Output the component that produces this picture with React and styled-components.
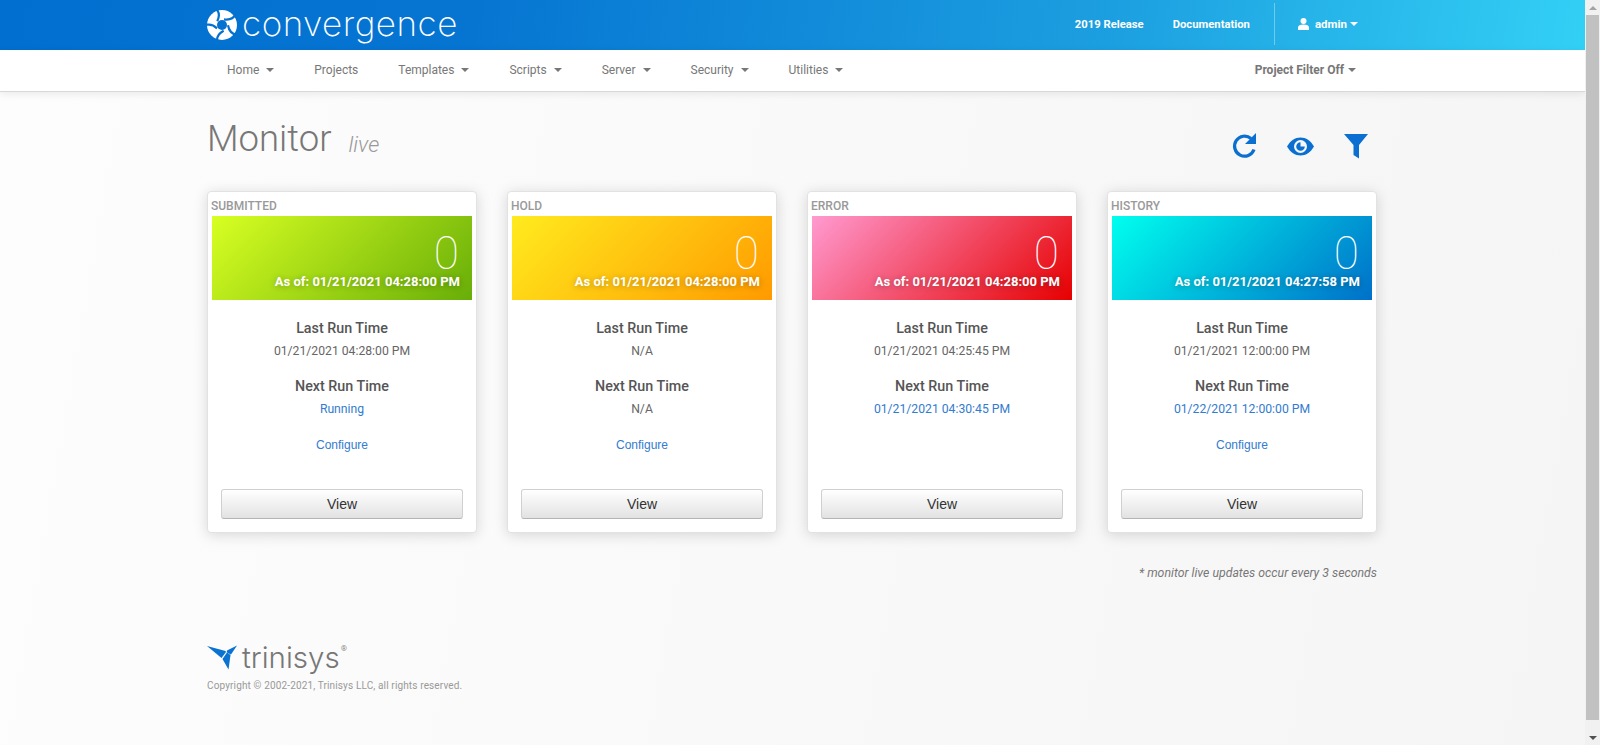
import React from "react";
import styled, { createGlobalStyle } from "styled-components";

const Global = createGlobalStyle`
    html, body {
        margin: 0;
        height: 100%;
        overflow: hidden;
    }
    body {
        font-family: "Roboto", sans-serif;
    }
    #root {
        height: 100%;
    }
`;

const Shell = styled.div`
    display: flex;
    height: 745px;
    width: 1600px;
`;

const Page = styled.div`
    flex: 1;
    min-width: 0;
    display: flex;
    flex-direction: column;
    background: linear-gradient(100deg, #fdfdfd 0%, #f5f5f5 100%);
`;

const Scrollbar = styled.div`
    width: 15px;
    flex: none;
    display: flex;
    flex-direction: column;
    background: #f1f1f1;
`;

const ScrollButton = styled.div`
    height: 15px;
    display: flex;
    align-items: center;
    justify-content: center;

    &::after {
        content: "";
        border-left: 4px solid transparent;
        border-right: 4px solid transparent;
        border-${(p) => (p.$up ? "bottom" : "top")}: 4px solid ${(p) => (p.$up ? "#a3a3a3" : "#505050")};
    }
`;

const ScrollThumb = styled.div`
    height: 705px;
    margin: 0 1px;
    background: #c1c1c1;
`;

const ScrollRest = styled.div`
    flex: 1;
`;

const Container = styled.div`
    width: 1170px;
    margin-left: 207px;
`;

const Header = styled.header`
    height: 50px;
    flex: none;
    background: linear-gradient(100deg, #006fcf 0%, #0675d2 30%, #1c9fe0 70%, #33d0f5 100%);
`;

const HeaderRow = styled(Container)`
    height: 100%;
    display: flex;
    align-items: center;
`;

const Brand = styled.div`
    display: flex;
    align-items: center;
    gap: 5px;
`;

const BrandName = styled.span`
    font-family: "Inter", sans-serif;
    font-weight: 200;
    font-size: 35px;
    line-height: 46px;
    padding-bottom: 4px;
    color: #fff;
    letter-spacing: 0.5px;
`;

const HeaderLinks = styled.nav`
    margin-left: auto;
    display: flex;
    align-items: center;
    height: 100%;
    padding-bottom: 2px;
    box-sizing: border-box;
`;

const HeaderLink = styled.a`
    font-size: 11.25px;
    font-weight: 700;
    color: #fff;
    margin-right: 24px;

    & + & {
        margin-left: 5px;
    }
`;

const UserMenu = styled.div`
    height: 42px;
    border-left: 1px solid rgba(255, 255, 255, 0.35);
    margin-right: 19px;
    padding-left: 23px;
    display: flex;
    align-items: center;
    gap: 6px;
    font-size: 11.5px;
    font-weight: 700;
    color: #fff;
`;

const Caret = styled.span`
    display: inline-block;
    border-left: 4px solid transparent;
    border-right: 4px solid transparent;
    border-top: 4px solid currentColor;
    margin-left: ${(p) => p.$gap ?? 7}px;
`;

const NavBar = styled.div`
    height: 41px;
    flex: none;
    background: #fff;
    border-bottom: 1px solid #d8d8d8;
    box-shadow: 0 2px 8px rgba(0, 0, 0, 0.08);
`;

const NavRow = styled(Container)`
    height: 100%;
    display: flex;
    align-items: center;
    padding-bottom: 2px;
    box-sizing: border-box;
`;

const NavItem = styled.a`
    font-size: 12px;
    color: #777;
    padding: 0 20px;
    display: flex;
    align-items: center;
`;

const FilterItem = styled.a`
    margin-left: auto;
    margin-right: 21px;
    font-size: 12px;
    font-weight: 700;
    color: #777;
    display: flex;
    align-items: center;
`;

const Content = styled(Container)`
    flex: 1;
    display: flex;
    flex-direction: column;
`;

const TitleRow = styled.div`
    display: flex;
    align-items: center;
    height: 100px;
    margin-bottom: -1px;
`;

const Title = styled.h1`
    margin: 0;
    font-size: 36.5px;
    font-weight: 300;
    color: #777;
    line-height: 92px;
`;

const TitleNote = styled.small`
    font-size: 22px;
    font-style: italic;
    font-weight: 300;
    color: #999;
    margin-left: 17px;
    vertical-align: -1px;
`;

const Tools = styled.div`
    margin: 8px 9px 0 auto;
    display: flex;
    align-items: center;
    gap: 30px;
`;

const Cards = styled.div`
    display: grid;
    grid-template-columns: repeat(4, 270px);
    gap: 30px;
`;

const Card = styled.section`
    height: 342px;
    box-sizing: border-box;
    display: flex;
    flex-direction: column;
    background: #fff;
    border: 1px solid #e2e2e2;
    border-radius: 4px;
    padding: 0 4px;
    box-shadow: 0 2px 14px rgba(0, 0, 0, 0.15);
    text-align: center;
`;

const CardLabel = styled.div`
    font-size: 12px;
    font-weight: 500;
    color: #999;
    text-align: left;
    height: 24px;
    line-height: 28px;
    margin-left: -1px;
`;

const Banner = styled.div`
    height: 84px;
    padding-right: 12px;
    display: flex;
    flex-direction: column;
    align-items: flex-end;
    color: #fff;
    background: linear-gradient(135deg, ${(p) => p.$from}, ${(p) => p.$to});
`;

const Count = styled.div`
    font-size: 46px;
    font-weight: 100;
    line-height: 42px;
    margin-top: 16px;
    padding-right: 1px;
`;

const AsOf = styled.div`
    font-size: 13px;
    font-weight: 700;
    line-height: 16px;
    text-shadow: 0 1px 6px rgba(0, 0, 0, 0.3);
`;

const InfoHeading = styled.div`
    font-size: 14.3px;
    font-weight: 500;
    color: #555;
    line-height: 20px;
    margin-top: ${(p) => (p.$first ? 18 : 16)}px;
`;

const InfoValue = styled.div`
    font-size: 12.2px;
    color: ${(p) => (p.$link ? "#337ccf" : "#666")};
    line-height: 18px;
    min-height: 18px;
    margin-top: 4px;
`;

const ConfigureLink = styled.a`
    font-family: "Liberation Sans", sans-serif;
    font-size: 12px;
    color: #337ccf;
    line-height: 18px;
    margin-top: 18px;
`;

const ViewButton = styled.button`
    margin: auto 9px 13px;
    height: 30px;
    flex: none;
    font-family: "Liberation Sans", sans-serif;
    font-size: 14px;
    color: #333;
    background: linear-gradient(#fff, #e2e2e2);
    border: 1px solid #d0d0d0;
    border-bottom-color: #b4b4b4;
    border-radius: 3px;
`;

const LiveNote = styled.p`
    margin: 31px 0 0;
    text-align: right;
    font-size: 12.3px;
    font-style: italic;
    color: #777;
    line-height: 18px;
`;

const Footer = styled.footer`
    margin-top: 60px;
`;

const TrinisysBrand = styled.div`
    display: flex;
    align-items: center;
    gap: 5px;
    height: 30px;
`;

const TrinisysName = styled.span`
    font-family: "Inter", sans-serif;
    font-size: 29.5px;
    font-weight: 300;
    color: #777;
    line-height: 30px;
`;

const Registered = styled.sup`
    font-size: 8px;
    color: #888;
    align-self: flex-start;
    margin-left: -4px;
    line-height: 14px;
`;

const Copyright = styled.div`
    margin-top: 7px;
    font-size: 10px;
    color: #999;
    line-height: 14px;
    letter-spacing: 0.14px;
`;

const monitors = [
    {
        label: "SUBMITTED",
        from: "#d8ff22",
        to: "#68ae08",
        asOf: "01/21/2021 04:28:00 PM",
        last: "01/21/2021 04:28:00 PM",
        next: "Running",
        nextLink: true,
        configurable: true,
    },
    {
        label: "HOLD",
        from: "#ffeb1e",
        to: "#ff9a00",
        asOf: "01/21/2021 04:28:00 PM",
        last: "N/A",
        next: "N/A",
        configurable: true,
    },
    {
        label: "ERROR",
        from: "#ff9ad0",
        to: "#e60000",
        asOf: "01/21/2021 04:28:00 PM",
        last: "01/21/2021 04:25:45 PM",
        next: "01/21/2021 04:30:45 PM",
        nextLink: true,
    },
    {
        label: "HISTORY",
        from: "#00ffee",
        to: "#0070c9",
        asOf: "01/21/2021 04:27:58 PM",
        last: "01/21/2021 12:00:00 PM",
        next: "01/22/2021 12:00:00 PM",
        nextLink: true,
        configurable: true,
    },
];

const navItems = [
    { name: "Home", menu: true },
    { name: "Projects" },
    { name: "Templates", menu: true },
    { name: "Scripts", menu: true },
    { name: "Server", menu: true },
    { name: "Security", menu: true },
    { name: "Utilities", menu: true },
];

function SwirlLogo() {
    const blades = [20, 92, 164, 236, 308];
    return (
        <svg width="30" height="30" viewBox="0 0 30 30">
            <circle cx="15" cy="15" r="15" fill="#fff" />
            {blades.map((a) => (
                <path
                    key={a}
                    d="M15 9C20 8 24 4.500 24.500 -1"
                    fill="none"
                    stroke="#0470cf"
                    strokeWidth="2.200"
                    transform={`rotate(${a} 15 15)`}
                />
            ))}
            <circle cx="15" cy="15" r="5" fill="#0470cf" />
        </svg>
    );
}

function TrinisysMark() {
    return (
        <svg width="30" height="25" viewBox="0 0 30 25">
            <path d="M0 1L18.500 6L19 7L14.500 13Z" fill="#0a72d0" />
            <path d="M30 0.500L20 5.500L19.800 7.500L24 9.500Z" fill="#0a72d0" />
            <path d="M15.500 14L20 7.500L23.500 10L21.500 24.500Z" fill="#0a72d0" />
        </svg>
    );
}

function RefreshIcon() {
    return (
        <svg width="25" height="26" viewBox="0 0 25 26">
            <path d="M22 16.500A10 10 0 1 1 19 5.500" fill="none" stroke="#0a6fd0" strokeWidth="3.200" />
            <path d="M24 0V11H13Z" fill="#0a6fd0" />
        </svg>
    );
}

function EyeIcon() {
    return (
        <svg width="27" height="19" viewBox="0 0 27 19">
            <path
                fillRule="evenodd"
                d="M0 9.500C3.500 3.500 8 0.500 13.500 0.500S23.500 3.500 27 9.500C23.500 15.500 19 18.500 13.500 18.500S3.500 15.500 0 9.500ZM13.500 3A6.500 6.500 0 1 0 13.500 16A6.500 6.500 0 1 0 13.500 3Z"
                fill="#0a6fd0"
            />
            <path d="M13.500 5.200A4.300 4.300 0 1 0 17.800 9.500H13.500Z" fill="#0a6fd0" />
        </svg>
    );
}

function FilterIcon() {
    return (
        <svg width="24" height="25" viewBox="0 0 24 25">
            <path d="M0 0H24L15 11V24.500L9.500 21V11Z" fill="#0a6fd0" />
        </svg>
    );
}

function UserIcon() {
    return (
        <svg width="11" height="12" viewBox="0 0 11 12">
            <circle cx="5.500" cy="3" r="3" fill="#fff" />
            <path d="M0 12V9.500C0 7.500 2 6.500 5.500 6.500S11 7.500 11 9.500V12Z" fill="#fff" />
        </svg>
    );
}

function MonitorCard({ monitor }) {
    return (
        <Card>
            <CardLabel>{monitor.label}</CardLabel>
            <Banner $from={monitor.from} $to={monitor.to}>
                <Count>0</Count>
                <AsOf>As of: {monitor.asOf}</AsOf>
            </Banner>
            <InfoHeading $first>Last Run Time</InfoHeading>
            <InfoValue>{monitor.last}</InfoValue>
            <InfoHeading>Next Run Time</InfoHeading>
            <InfoValue $link={monitor.nextLink}>{monitor.next}</InfoValue>
            {monitor.configurable && <ConfigureLink>Configure</ConfigureLink>}
            <ViewButton>View</ViewButton>
        </Card>
    );
}

export default function App() {
    return (
        <Shell>
            <Global />
            <Page>
                <Header>
                    <HeaderRow>
                        <Brand>
                            <SwirlLogo />
                            <BrandName>convergence</BrandName>
                        </Brand>
                        <HeaderLinks>
                            <HeaderLink>2019 Release</HeaderLink>
                            <HeaderLink>Documentation</HeaderLink>
                            <UserMenu>
                                <UserIcon />
                                admin
                                <Caret $gap={-3} />
                            </UserMenu>
                        </HeaderLinks>
                    </HeaderRow>
                </Header>
                <NavBar>
                    <NavRow>
                        {navItems.map((item) => (
                            <NavItem key={item.name}>
                                {item.name}
                                {item.menu && <Caret />}
                            </NavItem>
                        ))}
                        <FilterItem>
                            Project Filter Off
                            <Caret $gap={4} />
                        </FilterItem>
                    </NavRow>
                </NavBar>
                <Content>
                    <TitleRow>
                        <Title>
                            Monitor
                            <TitleNote>live</TitleNote>
                        </Title>
                        <Tools>
                            <RefreshIcon />
                            <EyeIcon />
                            <FilterIcon />
                        </Tools>
                    </TitleRow>
                    <Cards>
                        {monitors.map((m) => (
                            <MonitorCard key={m.label} monitor={m} />
                        ))}
                    </Cards>
                    <LiveNote>* monitor live updates occur every 3 seconds</LiveNote>
                    <Footer>
                        <TrinisysBrand>
                            <TrinisysMark />
                            <TrinisysName>trinisys</TrinisysName>
                            <Registered>®</Registered>
                        </TrinisysBrand>
                        <Copyright>Copyright © 2002-2021, Trinisys LLC, all rights reserved.</Copyright>
                    </Footer>
                </Content>
            </Page>
            <Scrollbar>
                <ScrollButton $up />
                <ScrollThumb />
                <ScrollRest />
                <ScrollButton />
            </Scrollbar>
        </Shell>
    );
}
